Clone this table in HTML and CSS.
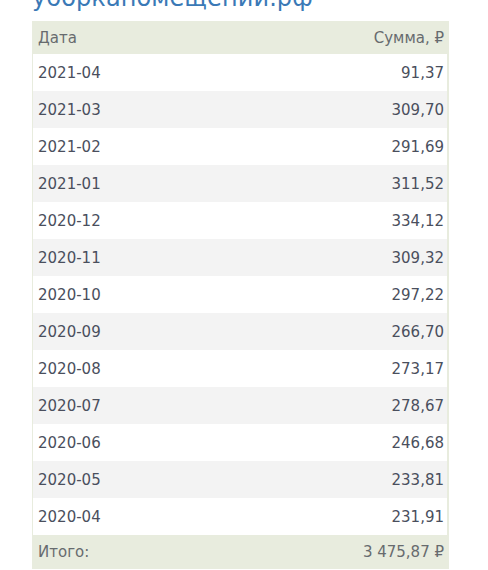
FILE: index.html
```html
<!DOCTYPE html>
<html lang="ru">
<head>
<meta charset="utf-8">
<link rel="stylesheet" href="styles.css">
</head>
<body>
<div class="page">
  <h1 class="title">уборкапомещении.рф</h1>
  <table class="report">
    <thead>
      <tr><th class="c-date">Дата</th><th class="c-sum">Сумма, ₽</th></tr>
    </thead>
    <tbody>
      <tr><td class="c-date">2021-04</td><td class="c-sum">91,37</td></tr>
      <tr><td class="c-date">2021-03</td><td class="c-sum">309,70</td></tr>
      <tr><td class="c-date">2021-02</td><td class="c-sum">291,69</td></tr>
      <tr><td class="c-date">2021-01</td><td class="c-sum">311,52</td></tr>
      <tr><td class="c-date">2020-12</td><td class="c-sum">334,12</td></tr>
      <tr><td class="c-date">2020-11</td><td class="c-sum">309,32</td></tr>
      <tr><td class="c-date">2020-10</td><td class="c-sum">297,22</td></tr>
      <tr><td class="c-date">2020-09</td><td class="c-sum">266,70</td></tr>
      <tr><td class="c-date">2020-08</td><td class="c-sum">273,17</td></tr>
      <tr><td class="c-date">2020-07</td><td class="c-sum">278,67</td></tr>
      <tr><td class="c-date">2020-06</td><td class="c-sum">246,68</td></tr>
      <tr><td class="c-date">2020-05</td><td class="c-sum">233,81</td></tr>
      <tr><td class="c-date">2020-04</td><td class="c-sum">231,91</td></tr>
    </tbody>
    <tfoot>
      <tr><td class="c-date">Итого:</td><td class="c-sum">3 475,87 ₽</td></tr>
    </tfoot>
  </table>
</div>
</body>
</html>
```
FILE: styles.css
```css
html, body {
  margin: 0;
  padding: 0;
  background: #ffffff;
}
body {
  font-family: "DejaVu Sans", Verdana, sans-serif;
  overflow: hidden;
}
.page {
  padding: 0 39px 0 32px;
}
.title {
  margin: -16px 0 9px 0;
  font-size: 24px;
  line-height: 28px;
  font-weight: normal;
  color: #3a79b6;
  letter-spacing: 0.1px;
}
.report {
  width: 417px;
  border-collapse: collapse;
  border-left: 1px solid #e8ecde;
  border-right: 2px solid #e8ecde;
  font-size: 15px;
}
.report th, .report td {
  padding: 0 3px 0 5px;
  font-weight: normal;
}
.report thead tr {
  height: 33px;
  background: #e8ecde;
  color: #676b6e;
}
.report tbody tr {
  height: 37px;
  color: #4a4f5d;
}
.report tbody tr:nth-child(even) {
  background: #f3f3f3;
}
.report tfoot tr {
  height: 34px;
  background: #e8ecde;
  color: #676b6e;
}
.c-date { text-align: left; }
.c-sum { text-align: right; }
```
